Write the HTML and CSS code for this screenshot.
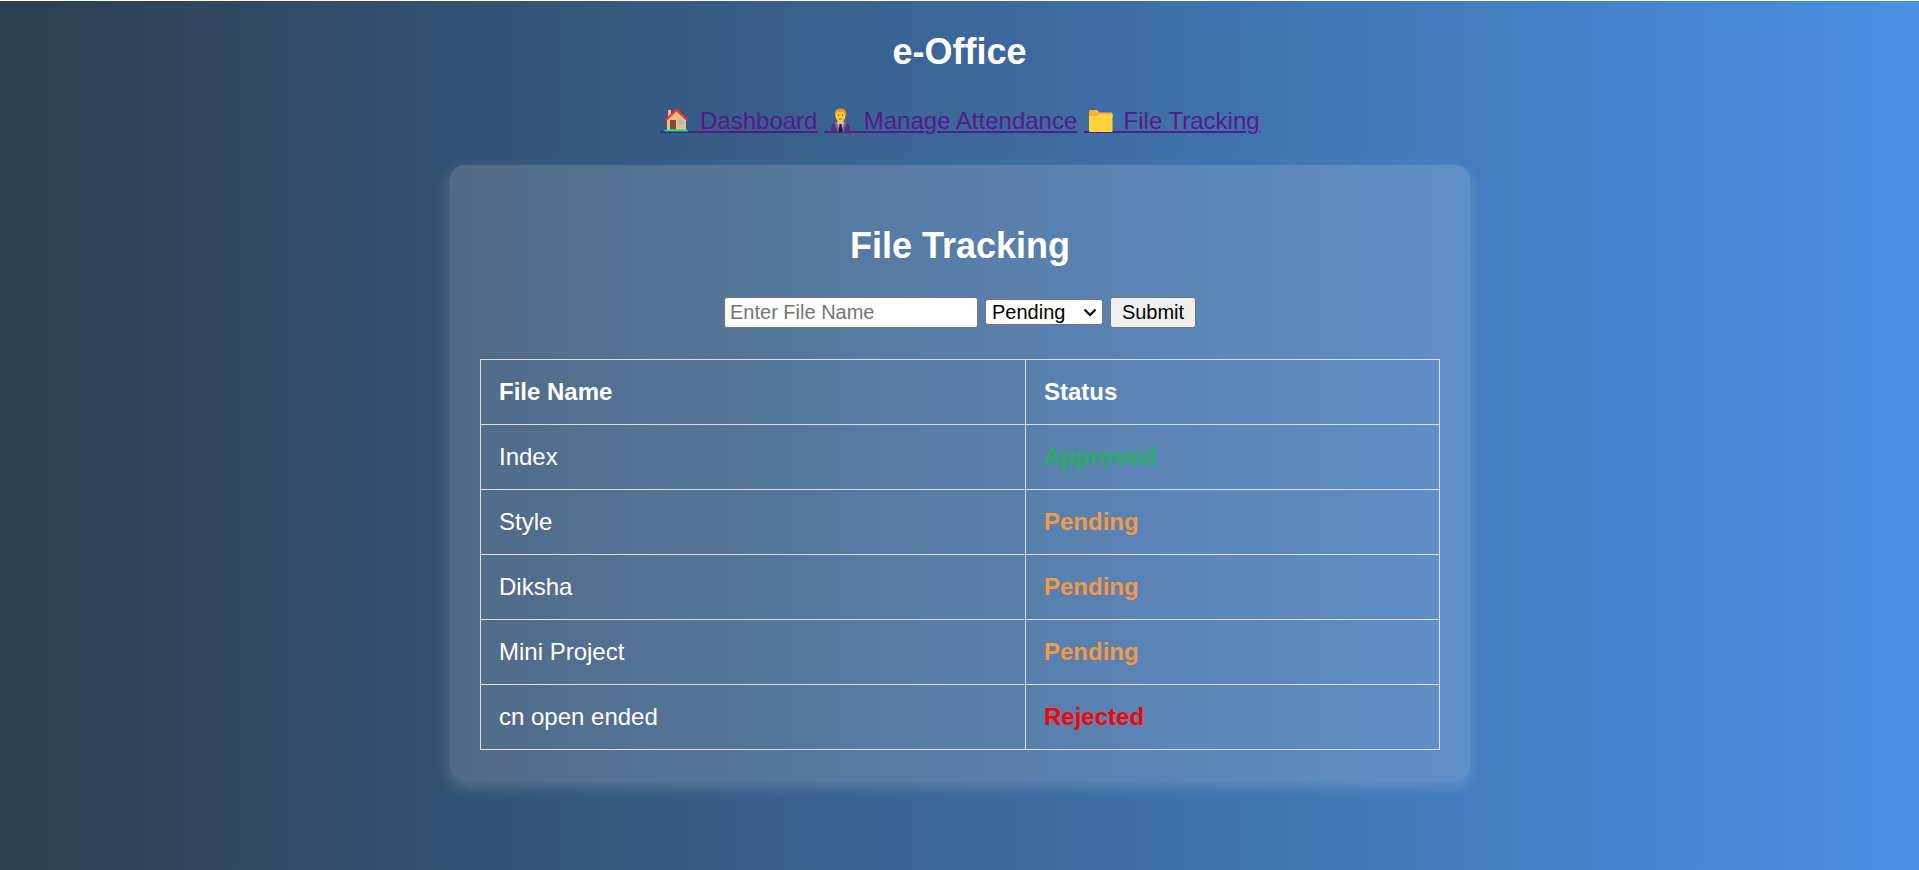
FILE: index.html
```html
<!DOCTYPE html>
<html lang="en">
<head>
<meta charset="utf-8">
<title>e-Office</title>
<link rel="stylesheet" href="styles.css">
</head>
<body>
<header class="header">
  <h1 class="brand">e-Office</h1>
  <nav class="nav">
    <a class="nav-link" href="#"><svg class="emoji" viewBox="0 0 33 25"><path fill="#551a8b" d="M0 23h33v2H0z"/><path fill="#f2bf7c" d="M8 1h3v8H8zM7 11.500L16.500 3 26 11.500V22H7z"/><path fill="#5c5563" d="M8 1h3v1H8z"/><path fill="none" stroke="#f92f35" stroke-width="2" d="M5.500 12.500L16.500 2l11 10.500"/><path fill="#7d4b3e" d="M10 12h6v9.500h-6z"/><path fill="#83c5f3" d="M18.500 12h5v5h-5z"/><path fill="#00e68a" d="M6 21.500h20.500q1.500 0 1.500 1v1H4.500v-1q0-1 1.500-1z"/></svg> Dashboard</a>
    <a class="nav-link" href="#"><svg class="emoji" viewBox="0 0 33 25"><path fill="#551a8b" d="M0 23h33v2H0z"/><path fill="#453a72" d="M7 24v-4q0-4 6-5.500h7q6 1.500 6 5.500v4z"/><path fill="#c7bad5" d="M12.500 14h8l-2 10h-4z"/><path fill="#8460ab" d="M12.500 14l4 10h-3l-3-9zM20.500 14l-4 10h3l3-9z"/><path fill="#201b30" d="M15.500 16h2l1 8h-4z"/><path fill="#ffc83d" d="M13.500 8h6v6l-3 2-3-2z"/><ellipse cx="16.500" cy="7.800" rx="5" ry="6" fill="#ffc83d"/><path fill="#f09a1a" d="M11 8Q9.500 .500 16.500 .500 23.500 .500 22 8L20 4h-7z"/><path fill="#6b4630" d="M14 6.500h1V8h-1zM18 6.500h1V8h-1z"/><path stroke="#bc6720" d="M14.800 11h3.400"/></svg> Manage Attendance</a>
    <a class="nav-link" href="#"><svg class="emoji" viewBox="0 0 33 25"><path fill="#551a8b" d="M0 23h33v2H0z"/><path fill="#ffb02e" d="M5 3.500Q5 2 6.500 2H13l2.500 2.500H27Q28.500 4.500 28.500 6v3.500H5z"/><path fill="#ffd43b" d="M5 9.500Q5 8 6.500 8h7L16 6.300h12.500v16.500q0 1.200-1.200 1.200H6.200Q5 24 5 22.800z"/></svg> File Tracking</a>
  </nav>
</header>
<main class="card">
  <h2 class="title">File Tracking</h2>
  <form class="form">
    <input class="name-input" type="text" placeholder="Enter File Name">
    <div class="status-select"><span>Pending</span><svg class="chevron" viewBox="0 0 14 9"><path d="M1.500 1.500L7 7l5.500-5.500"/></svg></div>
    <button class="submit" type="button">Submit</button>
  </form>
  <table class="files">
    <thead><tr><th class="col-name">File Name</th><th>Status</th></tr></thead>
    <tbody>
      <tr><td>Index</td><td class="approved">Approved</td></tr>
      <tr><td>Style</td><td class="pending">Pending</td></tr>
      <tr><td>Diksha</td><td class="pending">Pending</td></tr>
      <tr><td>Mini Project</td><td class="pending">Pending</td></tr>
      <tr><td>cn open ended</td><td class="rejected">Rejected</td></tr>
    </tbody>
  </table>
</main>
</body>
</html>
```
FILE: styles.css
```css
* { box-sizing: border-box; }
html { height: 100%; }
body {
  margin: 0;
  height: 870px;
  overflow: hidden;
  border-top: 1px solid #fff;
  background: linear-gradient(to right, #2c3e50, #4a90e2);
  color: #fff;
  font: 24px/28px "Liberation Sans", Arial, sans-serif;
}
.header { height: 164px; padding-top: 30px; text-align: center; }
.brand { margin: 0; font-size: 36px; line-height: 42px; }
.nav { display: flex; justify-content: center; gap: 6.67px; margin-top: 34px; padding-left: 1px; }
.nav-link {
  color: #551a8b;
  text-decoration: underline;
  text-decoration-thickness: 2px;
  text-underline-offset: 2px;
  white-space: nowrap;
}
.emoji { width: 33px; height: 25px; vertical-align: -4px; }
.card {
  width: 1020px;
  margin: 0 auto;
  padding: 60px 30px 30px;
  border-radius: 15px;
  background: rgba(255, 255, 255, 0.15);
  box-shadow: 0 6px 15px rgba(255, 255, 255, 0.2);
}
.title { margin: 0; padding-left: 1px; font-size: 36px; line-height: 42px; text-align: center; }
.form { display: flex; justify-content: center; align-items: center; gap: 7px; margin-top: 30px; height: 31px; padding-left: 1px; }
.name-input, .status-select, .submit {
  border: 1px solid #767676;
  border-radius: 3px;
  font: 20px/23px "Liberation Sans", Arial, sans-serif;
  color: #000;
}
.name-input { width: 254px; height: 31px; padding: 0 5px; background: #fff; }
.name-input::placeholder { color: #757575; }
.status-select {
  display: flex;
  align-items: center;
  justify-content: space-between;
  width: 118px;
  height: 26px;
  margin-top: -1px;
  padding: 0 5px 0 6px;
  background: #fff;
}
.chevron { width: 14px; height: 9px; fill: none; stroke: #000; stroke-width: 2.2; }
.submit { width: 86px; height: 31px; padding: 0; background: #efefef; }
.files { width: 960px; margin-top: 31px; border-collapse: collapse; table-layout: fixed; }
.files th, .files td { height: 65px; padding: 0 18px 0 18.5px; border: 1px solid #ddd; text-align: left; }
.col-name { width: 545px; }
.approved, .pending, .rejected { font-weight: bold; }
.approved { color: #27ae60; }
.pending { color: #f2994a; }
.rejected { color: #f00; }
```
